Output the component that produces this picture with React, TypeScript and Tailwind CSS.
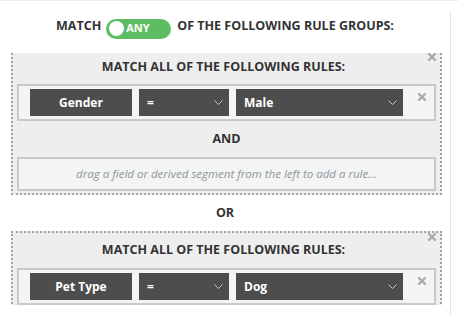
import React from "react";

const font = { fontFamily: '"Open Sans", "Liberation Sans", sans-serif' };

const CloseX = ({ className = "" }: { className?: string }) => (
    <svg width="8" height="8" viewBox="0 0 8 8" className={className}>
        <path d="M1 1L7 7M7 1L1 7" stroke="#a9a9a9" strokeWidth="2.2" strokeLinecap="square" />
    </svg>
);

const Chevron = () => (
    <svg width="9" height="5" viewBox="0 0 9 5" className="shrink-0">
        <path d="M0.5 0.5L4.5 4.5L8.5 0.5" stroke="#c4c4c4" strokeWidth="1" fill="none" />
    </svg>
);

interface RuleProps {
    field: string;
    value: string;
}

const RuleRow: React.FC<RuleProps> = ({ field, value }) => (
    <div className="border-2 border-[#c9c9c9] bg-[#f4f4f4] py-[3px] pl-[11px] flex items-start">
        <div className="w-[102px] h-[27px] bg-[#4d4d4d] text-white text-[12px] font-bold flex items-center justify-center">
            {field}
        </div>
        <div className="ml-[7px] w-[90px] h-[27px] bg-[#4d4d4d] text-white text-[12px] font-bold flex items-center justify-between pl-[8px] pr-[6px]">
            <span>=</span>
            <Chevron />
        </div>
        <div className="ml-[7px] w-[167px] h-[27px] bg-[#4d4d4d] text-white text-[12px] font-bold flex items-center justify-between pl-[8px] pr-[6px]">
            <span>{value}</span>
            <Chevron />
        </div>
        <CloseX className="ml-[15px] mt-[4px]" />
    </div>
);

const RuleGroup: React.FC<{ first?: boolean; children: React.ReactNode }> = ({ first, children }) => (
    <div
        className={
            "relative ml-[11px] mr-[8px] bg-[#eeeeef] border-dotted border-[#a3a3a3] px-[4px] " +
            (first ? "border-x-2 border-b-2" : "border-2")
        }
    >
        <CloseX className="absolute right-[4px] top-[0px]" />
        <div
            className={
                "flex items-center justify-center text-[12.5px] font-bold text-[#333] pr-[6px] " +
                (first ? "h-[31px] pb-[3px]" : "h-[35px]")
            }
        >
            MATCH ALL OF THE FOLLOWING RULES:
        </div>
        {children}
    </div>
);

export default function App() {
    return (
        <div className="w-[458px] h-[315px] bg-white overflow-hidden border-t border-[#ececec]" style={font}>
            <div className="flex">
                <div className="w-[450px] h-[304px] overflow-hidden">
                    <div className="h-[52px] flex items-center justify-center text-[12.5px] font-bold text-[#333] pb-[2px]">
                        <span>MATCH</span>
                        <div className="ml-[5px] mr-[6px] mt-[5px] w-[65px] h-[20px] rounded-full bg-[#5cbd62] flex items-center pl-[3px]">
                            <div className="w-[15px] h-[15px] rounded-full bg-white" />
                            <span className="ml-[2px] text-[11px] text-white font-bold">ANY</span>
                        </div>
                        <span>OF THE FOLLOWING RULE GROUPS:</span>
                    </div>

                    <RuleGroup first>
                        <RuleRow field="Gender" value="Male" />
                        <div className="h-[36px] flex items-center justify-center text-[12.5px] font-bold text-[#333]">
                            AND
                        </div>
                        <div className="h-[34px] border-2 border-[#c9c9c9] bg-[#f4f4f4] flex items-center justify-center text-[11.5px] italic text-[#8a979e] mb-[2px]">
                            drag a field or derived segment from the left to add a rule…
                        </div>
                    </RuleGroup>

                    <div className="h-[36px] flex items-center justify-center text-[12.5px] font-bold text-[#333]">
                        OR
                    </div>

                    <RuleGroup>
                        <RuleRow field="Pet Type" value="Dog" />
                    </RuleGroup>
                </div>
                <div className="w-px h-[305px] mt-[10px] bg-[#e6e6e6]" />
            </div>
        </div>
    );
}
